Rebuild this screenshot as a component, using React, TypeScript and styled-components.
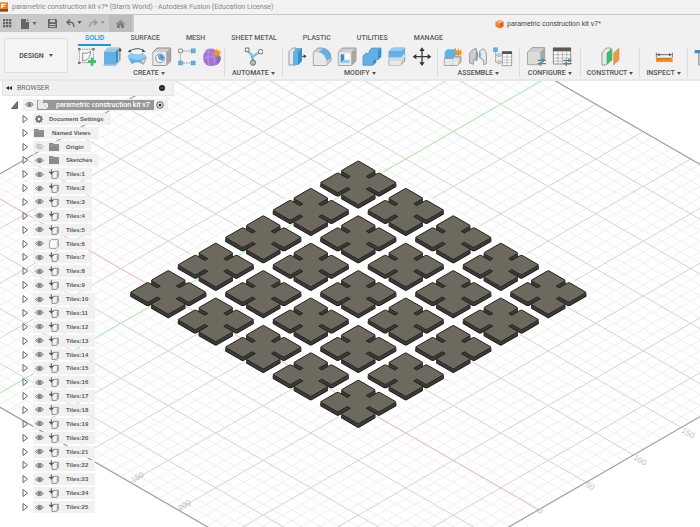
import React from "react";
import styled, { createGlobalStyle } from "styled-components";

const GlobalStyle = createGlobalStyle`
  * { box-sizing: border-box; }
  body { margin: 0; background: #fff; font-family: Roboto, "Liberation Sans", sans-serif; }
  button { font: inherit; color: inherit; border: 0; padding: 0; margin: 0; background: none; }
  ul { list-style: none; margin: 0; padding: 0; }
  svg { display: block; flex: none; }
`;

/* ---------- frame ---------- */

const Page = styled.div`
  min-height: 100vh;
  display: flex;
  flex-direction: column;
  overflow: hidden;
  color: #505050;
`;

const TitleBar = styled.header`
  display: flex;
  align-items: center;
  gap: 4px;
  height: 15px;
  padding-bottom: 1px;
  background: #f2f2f2;
  border-bottom: 1px solid #c6c6c6;
  font: 7px/12px Roboto, sans-serif;
  color: #858585;
  white-space: nowrap;
`;

const TabStrip = styled.div`
  display: flex;
  height: 17px;
  background: #f1f1f1;
`;

const QuickAccess = styled.div`
  display: flex;
  align-items: center;
  width: 134px;
  background: #c9c9c9;
  padding-right: 2px;
`;

const QuickButton = styled.button<{ $w: number; $home?: boolean }>`
  width: ${(p) => p.$w}px;
  height: 17px;
  display: flex;
  align-items: center;
  justify-content: center;
  background: ${(p) => (p.$home ? "#bcbcbc" : "transparent")};
  margin-left: ${(p) => (p.$home ? "auto" : "0")};
`;

const DocumentTab = styled.div`
  flex: 1;
  display: flex;
  align-items: center;
  justify-content: center;
  gap: 3px;
  padding-left: 262px;
  font: 7px/12px "Liberation Sans", sans-serif;
  color: #444;
  white-space: nowrap;
`;

const Toolbar = styled.div`
  display: flex;
  height: 49px;
  background: #f1f1f1;
  border-bottom: 2px solid #e8e8e8;
`;

const WorkspaceButton = styled.button`
  width: 64px;
  height: 35px;
  flex: none;
  margin: 6px 6px 0 4px;
  border: 1px solid #dedede;
  border-radius: 2px;
  background: #f4f4f4;
  font-size: 7px;
  font-weight: 600;
  display: flex;
  align-items: center;
  justify-content: center;
  gap: 5px;
`;

const Ribbon = styled.div`
  flex: 1;
  min-width: 0;
  overflow: hidden;
`;

const Tabs = styled.nav`
  display: flex;
  gap: 12px;
  height: 15px;
  padding-left: 4px;
`;

const Tab = styled.button<{ $active?: boolean }>`
  height: 14px;
  padding: 0 7px;
  font-size: 7px;
  line-height: 12px;
  font-weight: 500;
  white-space: nowrap;
  color: ${(p) => (p.$active ? "#1d8fd6" : "#5c5c5c")};
  border-bottom: 2px solid ${(p) => (p.$active ? "#2196db" : "transparent")};
`;

const Groups = styled.div`
  display: flex;
`;

const Group = styled.section<{ $pad: number }>`
  flex: none;
  display: flex;
  flex-direction: column;
  align-items: center;
  height: 30px;
  padding: 0 ${(p) => p.$pad}px;
  border-right: 1px solid #dcdcdc;
`;

const Tools = styled.div`
  display: flex;
`;

const Tool = styled.button`
  width: 25px;
  height: 20px;
  display: flex;
  justify-content: center;
`;

const GroupLabel = styled.button`
  display: flex;
  align-items: center;
  gap: 2px;
  font-size: 7px;
  font-weight: 500;
  line-height: 13px;
  white-space: nowrap;
`;

const Caret = () => (
  <svg width="4" height="3" viewBox="0 0 4 3"><path d="M0 0h4L2 3z" fill="#555" /></svg>
);

/* ---------- small glyphs ---------- */

const AppLogo = () => (
  <svg width="8" height="11" viewBox="0 0 24 33">
    <path d="M0 4h24v26H0z" fill="#f07a1c" />
    <path d="M0 24h24v8H0z" fill="#9c4611" />
    <path d="M5 22V10h12M5 16h9" fill="none" stroke="#fff" strokeWidth="4" />
  </svg>
);

const GridGlyph = () => (
  <svg width="9" height="9" viewBox="0 0 9 9" fill="#666">
    {[0, 3, 6].map((x) => [0, 3, 6].map((y) => <rect key={`${x}${y}`} x={x} y={y} width="2.300" height="2.300" />))}
  </svg>
);
const FileGlyph = () => (
  <svg width="16" height="10" viewBox="0 0 16 10" fill="#666">
    <path d="M0 0h5v3h3v7H0z" /><path d="M6 0l2 2H6zM11.500 3h4l-2 3z" />
  </svg>
);
const SaveGlyph = () => (
  <svg width="9" height="9" viewBox="0 0 9 9">
    <path d="M0 0h8l1 1v8H0z" fill="#666" /><path d="M2 .8h5v2.400H2zM1.500 5h6v1h-6zM1.500 7h6v1h-6z" fill="#c9c9c9" />
  </svg>
);
const ArrowGlyph = ({ redo }: { redo?: boolean }) => (
  <svg width="16" height="9" viewBox="0 0 16 9" fill="none" stroke={redo ? "#999" : "#666"} strokeWidth="1.400">
    {redo ? <path d="M5 .5l3 2.700-3 2.700M8 3.200H4Q1 3.400.7 8" /> : <path d="M4 .5L1 3.200l3 2.700M1 3.200h4Q7.600 3.400 8 8" />}
    <path d="M11.500 2h4l-2 3z" fill={redo ? "#999" : "#555"} stroke="none" />
  </svg>
);
const HomeGlyph = () => (
  <svg width="9" height="8" viewBox="0 0 9 8" fill="#777">
    <path d="M4.500 0L9 4l-.7.600L4.500 1.300.7 4.600 0 4z" /><path d="M4.500 2L8 5v3H5.300V5.500H3.700V8H1V5z" />
  </svg>
);
const DocCube = () => (
  <svg width="9" height="10" viewBox="0 0 18 20">
    <path d="M9 1l8 4-8 4-8-4z" fill="#ffb06a" /><path d="M1 5l8 4v10l-8-4z" fill="#f08427" /><path d="M17 5L9 9v10l8-4z" fill="#db5f12" />
  </svg>
);

/* ---------- ribbon icons, 60 unit square ---------- */

const B = "#63b0e6";
const BD = "#3a8fcb";
const BL = "#8fcdf5";
const G1 = "#e9e9e9";
const G2 = "#cfcfcf";
const G3 = "#a6a6a6";
const LN = "#8c8c8c";

const star = (x: number, y: number) => (
  <path d={`M${x} ${y - 13}l3 8 8-3-3 7 6 2-7 3 2 7-6-4-3 7-3-7-6 4 2-7-7-3 6-2-3-7 8 3z`} fill="#f0932b" />
);

const drawings: Record<string, React.ReactNode> = {
  sketch: (
    <>
      <path d="M7 7h42v40H7z" fill="#f7f7f7" stroke="#777" strokeWidth="2" strokeDasharray="5 2" />
      <path d="M17 42V18c14 2 18-1 24-6-1 17-7 28-24 30z" fill="none" stroke="#777" strokeWidth="2.500" />
      <path d="M3 3h7v7H3zM46 3h7v7h-7zM3 44h7v7H3z" fill="#777" />
      <path d="M41 32h8v8h8v8h-8v8h-8v-8h-8v-8h8z" fill="#3fbf63" />
    </>
  ),
  extrude: (
    <>
      <path d="M6 16L18 3h34L42 16z" fill={G1} stroke={LN} strokeWidth="2" />
      <path d="M6 14h34v39H6z" fill={B} /><path d="M40 14l9-9v38l-9 10z" fill={BD} />
      <path d="M6 14L15 5h34l-9 9z" fill={BL} />
      <path d="M6 50v5h36l10-11V12" fill="none" stroke="#999" strokeWidth="2" />
      <path d="M54 10v30M54 3l4 9h-8z" fill="#444" stroke="#555" strokeWidth="2" />
    </>
  ),
  revolve: (
    <>
      <path d="M8 12Q30-1 50 10" fill="none" stroke="#555" strokeWidth="3" /><path d="M2 15l8-8 2 9zM56 15l-9-8-2 8z" fill="#444" />
      <path d="M2 28L12 18q18 9 36 0l10 12-10 22q-18-12-34 0z" fill={B} />
      <path d="M2 28L12 18q18 9 36 0l10 12q-13 10-25 9-18 0-31-11z" fill={BL} />
      <path d="M42 38l16-7-8 21-8-5z" fill={G2} stroke={LN} strokeWidth="2" />
    </>
  ),
  hole: (
    <>
      <path d="M3 15L15 3h41v39L43 55H3z" fill={G2} stroke={LN} strokeWidth="3" />
      <path d="M4 15h39v39H4z" fill={G1} /><path d="M43 15L55 4v38L43 54z" fill={G3} />
      <circle cx="24" cy="34" r="13" fill="#fff" stroke={LN} strokeWidth="3" />
      <path d="M24 23a11 11 0 0 1 7 19Q17 42 18 25z" fill={B} /><path d="M24 23a11 11 0 0 1 11 14q-9-2-11-14z" fill={BD} />
    </>
  ),
  pattern: (
    <>
      <path d="M10 12h40M10 48h40M10 12v36" stroke="#777" strokeWidth="2" strokeDasharray="6 2" />
      <path d="M5 6h11v11H5z" fill="#fff" stroke="#777" strokeWidth="2.500" />
      <path d="M42 5h13v13H42zM4 42h13v12H4zM42 42h13v12H42z" fill={B} stroke={BD} />
    </>
  ),
  form: (
    <>
      <path d="M13 8q18-8 30 3l13 19q2 14-11 23-18 8-33 0Q-1 40 5 22z" fill="#a573d4" />
      <path d="M10 12q18 2 28 15l-1 25M5 33q16-5 33-4M22 6q-8 20-1 48" fill="none" stroke="#bd93e4" strokeWidth="3" />
      <path d="M43 28l13 2q1 14-11 23z" fill="#8b6bb0" />
      {star(45, 17)}
    </>
  ),
  automate: (
    <>
      <path d="M12 10l18 18 20-13M22 18q8 10 8 28" fill="none" stroke={BD} strokeWidth="6" />
      <path d="M12 10l18 18 20-13M30 28v18" fill="none" stroke={BL} strokeWidth="4" />
      <path d="M7 3h11v11H7z" fill="#eee" stroke="#777" strokeWidth="3" />
      <circle cx="53" cy="14" r="7" fill="#eee" stroke="#777" strokeWidth="3" /><circle cx="30" cy="47" r="8" fill="#bbb" stroke="#777" strokeWidth="3" />
    </>
  ),
  press: (
    <>
      <path d="M6 14L17 3h10v51H6z" fill={G1} stroke={LN} strokeWidth="2.500" />
      <path d="M18 14L29 3h16v39L33 54H18z" fill={B} /><path d="M33 14L45 3v39L33 54z" fill={BD} />
      <path d="M45 28h7" stroke="#444" strokeWidth="3" /><path d="M50 22l9 6-9 6z" fill="#444" />
    </>
  ),
  fillet: (
    <>
      <path d="M4 16L17 3h14q25 4 26 28v10L43 55H4z" fill={G2} stroke={LN} strokeWidth="2.500" />
      <path d="M5 16h13q22 5 25 28v10H5z" fill={G1} /><path d="M21 15L33 4q23 6 24 28L45 41Q39 20 21 15z" fill={B} />
    </>
  ),
  shell: (
    <>
      <path d="M4 16L16 3h41v39L43 55H4z" fill={G2} stroke={LN} strokeWidth="2.500" />
      <path d="M5 16h38v38H5z" fill={G1} /><path d="M43 16L56 4v38L43 54z" fill={G3} />
      <path d="M11 22h27v26H11z" fill="#fff" /><path d="M11 22h11v16L11 48z" fill={BD} /><path d="M11 48l11-10h16v10z" fill={BL} />
    </>
  ),
  combine: (
    <>
      <path d="M21 12L30 3h27v26l-9 9h-6v8L32 55H3V27l8-8h10z" fill={B} stroke={BD} strokeWidth="2" />
      <path d="M48 12l9-9v26l-9 9zM33 40l9-2v8L33 55z" fill={BD} />
    </>
  ),
  split: (
    <>
      <path d="M6 14L17 3h36v39L41 54H6z" fill={G2} stroke={LN} strokeWidth="2.500" />
      <path d="M6 12L15 3h39v16L42 31H6z" fill={B} /><path d="M6 12L15 3h39L42 12z" fill={BL} />
      <path d="M3 36h39L57 22" fill="none" stroke="#f1f1f1" strokeWidth="6" />
      <path d="M3 36h39L57 22" fill="none" stroke={BL} strokeWidth="3" />
      <path d="M7 41h34v13H7z" fill={G1} />
    </>
  ),
  move: (
    <>
      <path d="M30 8v42M9 29h42" stroke="#3c3c3c" strokeWidth="4" />
      <path d="M30 1l8 11H22zM30 57l8-11H22zM2 29l11-8v16zM58 29l-11-8v16z" fill="#333" />
    </>
  ),
  newComponent: (
    <>
      <path d="M4 34h26V12L39 4M4 34v21h39l11-10V29H30" fill={G2} stroke={LN} strokeWidth="2.500" />
      <path d="M5 15L13 7h26v17l-9 10H5z" fill={B} /><path d="M31 35h14v19H31z" fill={G1} /><path d="M5 36h23v18H5z" fill={G1} />
      {star(46, 16)}
    </>
  ),
  joint: (
    <>
      <path d="M5 48V20Q11 5 25 5l2 18v18L16 37v15z" fill={G2} stroke={LN} strokeWidth="2.500" />
      <path d="M35 12q5-5 12-7 8 6 8 18v27l-8 3V39l-11-6z" fill={G1} stroke={LN} strokeWidth="2.500" />
      <path d="M25 8l6 12-4 20-5-6z" fill="#999" /><path d="M34 12l5 10-3 12-4-3z" fill={B} />
    </>
  ),
  table: (
    <>
      <path d="M8 12v34h18M8 24h18" fill="none" stroke="#888" strokeWidth="2" />
      <path d="M1 2h13v12H1z" fill={B} stroke={BD} /><path d="M14 20h10v9H14zM14 41h10v9H14z" fill={G2} stroke={LN} />
      <path d="M28 14h28v42H28z" fill="#fff" stroke={LN} strokeWidth="2.500" /><path d="M27 13h30v8H27z" fill="#555" />
      <path d="M28 30h28M28 39h28M28 47h28M42 21v34" stroke={G3} strokeWidth="2" />
    </>
  ),
  configure: (
    <>
      <path d="M2 15L15 2h38v38L41 53H2z" fill={G2} stroke={LN} strokeWidth="2.500" />
      <path d="M3 15h37v37H3z" fill="#dcdcdc" /><path d="M40 15L52 3v37L40 52z" fill={G3} />
      <path d="M32 40h25M32 50h25" stroke="#666" strokeWidth="3" /><path d="M46 35h5v10h-5zM38 45h5v11h-5z" fill={BD} />
    </>
  ),
  configTable: (
    <>
      <path d="M4 3h52v48H4z" fill="#fff" stroke={LN} strokeWidth="3" /><path d="M3 2h54v11H3z" fill="#5b5b50" />
      <path d="M4 23h52M4 33h52M4 42h52M18 13v38M31 13v38M44 13v38" stroke={G3} strokeWidth="2.500" />
      <path d="M34 40h25M34 50h25" stroke="#666" strokeWidth="3" /><path d="M48 35h5v10h-5zM40 45h5v11h-5z" fill={BD} />
    </>
  ),
  construct: (
    <>
      <path d="M6 17L19 3h13v37L17 54H6z" fill={G1} stroke={LN} strokeWidth="2.500" />
      <path d="M20 17L37 4v35L20 54z" fill="#44b96b" /><path d="M41 17L57 4v35L41 54z" fill="#ec9a46" />
      <path d="M41 17L57 4v35L41 54z" fill="none" stroke="#d5802c" strokeWidth="2" strokeDasharray="4 2" />
    </>
  ),
  inspect: (
    <>
      <path d="M7 17v14M55 17v14M10 23h42" stroke="#555" strokeWidth="2.500" /><path d="M9 23l8-4v8zM53 23l-8-4v8z" fill="#444" />
      <path d="M6 32h50v13H6z" fill="#f0932b" /><path d="M12 33v5M19 33v5M26 33v5M33 33v5M40 33v5M47 33v5" stroke="#8b5313" strokeWidth="2" />
    </>
  ),
  insert: (
    <>
      <path d="M14 18L25 7h31v36L44 54H14z" fill={G2} stroke={LN} strokeWidth="2.500" />
      <path d="M2 9h16V3l14 11-14 11v-6H2z" fill={BD} />
    </>
  ),
};

const RibbonIcon = ({ name }: { name: string }) => (
  <svg width="20" height="20" viewBox="0 0 60 60">{drawings[name]}</svg>
);

const groups: { label: string; pad: number; tools: string[] }[] = [
  { label: "CREATE", pad: 0, tools: ["sketch", "extrude", "revolve", "hole", "pattern", "form"] },
  { label: "AUTOMATE", pad: 7, tools: ["automate"] },
  { label: "MODIFY", pad: 2, tools: ["press", "fillet", "shell", "combine", "split", "move"] },
  { label: "ASSEMBLE", pad: 3, tools: ["newComponent", "joint", "table"] },
  { label: "CONFIGURE", pad: 5, tools: ["configure", "configTable"] },
  { label: "CONSTRUCT", pad: 6, tools: ["construct"] },
  { label: "INSPECT", pad: 6, tools: ["inspect"] },
  { label: "", pad: 4, tools: ["insert"] },
];

/* ---------- model view ---------- */

const Viewport = styled.main`
  position: relative;
  flex: 1;
  overflow: hidden;
`;

const Scene = styled.svg`
  position: absolute;
  inset: 0;
  width: 100%;
  height: 100%;
`;

const ORIGIN = { x: 168.2, y: 296 };
const STEP = { x: 47.5, y: 27.4 };
const A_RANGE = [-4, 7.8];
const B_RANGE = [-3.8, 8];

const project = (a: number, b: number) => [ORIGIN.x + STEP.x * (a + b), ORIGIN.y + STEP.y * (a - b)];
const line = (a1: number, b1: number, a2: number, b2: number) =>
  `M${project(a1, b1).map((n) => n.toFixed(2)).join(" ")}L${project(a2, b2).map((n) => n.toFixed(2)).join(" ")}`;

const gridPath = (major: boolean) => {
  let d = "";
  for (let i = -20; i <= 40; i++) {
    if ((i % 5 === 0) !== major) continue;
    const t = i / 5;
    if (t >= A_RANGE[0] && t <= A_RANGE[1]) d += line(t, B_RANGE[0], t, B_RANGE[1]);
    if (t >= B_RANGE[0] && t <= B_RANGE[1]) d += line(A_RANGE[0], t, A_RANGE[1], t);
  }
  return d;
};

const tileQuarter = [
  [-0.39, 0.4], [-0.05, 0.4], [-0.032, 0.38], [-0.032, 0.2], [0.032, 0.2], [0.032, 0.38], [0.05, 0.4], [0.39, 0.4], [0.4, 0.39],
];
const tileOutline: number[][] = [];
for (let q = 0; q < 4; q++) {
  tileQuarter.forEach(([a, b]) => {
    let p = [a, b];
    for (let k = 0; k < q; k++) p = [p[1], -p[0]];
    tileOutline.push([STEP.x * (p[0] + p[1]), STEP.y * (p[0] - p[1])]);
  });
}
const tilePath = (dy: number) => `M${tileOutline.map(([x, y]) => `${x.toFixed(2)} ${(y + dy).toFixed(2)}`).join("L")}Z`;

const TileShape = () => (
  <g strokeLinejoin="round">
    <path d={tilePath(3.5)} fill="#302f2c" stroke="#1d1c1a" strokeWidth="1.200" />
    {[2.5, 1.5].map((dy) => <path key={dy} d={tilePath(dy)} fill="#45433e" stroke="#3b3935" strokeWidth="1.200" />)}
    <path d={tilePath(0)} fill="#6d695f" stroke="#24231f" strokeWidth="1" />
  </g>
);

const tiles = Array.from({ length: 25 }, (_, n) => ({ i: n % 5, j: Math.floor(n / 5) })).sort((p, q) => p.i + p.j - q.i - q.j);

const ScaleText = styled.text`
  font: 8px "Liberation Sans", sans-serif;
  fill: #bdbdbd;
`;

const Model = () => (
  <Scene viewBox="0 81 700 446" preserveAspectRatio="xMidYMin slice" role="img" aria-label="Isometric view of 25 tiles">
    <path d={gridPath(false)} stroke="#efefef" strokeWidth="1" />
    <path d={gridPath(true)} stroke="#d3d3d3" strokeWidth="1" />
    <path d="M358 156L592 292 358 428 126 292z" fill="#fff" />
    <path d={line(A_RANGE[0], 0, A_RANGE[1], 0)} stroke="#ffb9b3" strokeWidth="1" />
    <path d={line(0, B_RANGE[0], 0, B_RANGE[1])} stroke="#a6f5a6" strokeWidth="1" />
    <path
      d={line(-4, -3.8, -4, 8) + line(-4, 8, 7.8, 8) + line(7.8, 8, 7.8, -3.8) + line(7.8, -3.8, -4, -3.8)}
      stroke="#9f9f9f" strokeWidth="1.200"
    />
    <ScaleText transform="translate(133 483) rotate(-30)">150</ScaleText>
    <ScaleText transform="translate(180 511) rotate(-30)">200</ScaleText>
    <ScaleText transform="translate(537 512) rotate(30)">0</ScaleText>
    <ScaleText transform="translate(585 486) rotate(30)">50</ScaleText>
    <ScaleText transform="translate(633 459) rotate(30)">100</ScaleText>
    <ScaleText transform="translate(681 432) rotate(30)">150</ScaleText>
    {tiles.map(({ i, j }) => (
      <g key={`${i}-${j}`} transform={`translate(${358.3 + STEP.x * (i - j)} ${182.8 + STEP.y * (i + j)})`}>
        <TileShape />
      </g>
    ))}
  </Scene>
);

/* ---------- browser tree ---------- */

const Browser = styled.aside`
  position: relative;
  width: 174px;
  font: 6px/10px "Liberation Sans", sans-serif;
`;

const BrowserHeader = styled.div`
  display: flex;
  align-items: center;
  gap: 5px;
  height: 15px;
  margin-left: 2px;
  padding: 0 6px 0 3px;
  background: #f0f0f0;
  border: 1px solid #e6e6e6;
  border-top: 0;
  font: 7px/12px Roboto, sans-serif;
  color: #666;
`;

const Spacer = styled.span`
  flex: 1;
`;

const Tree = styled.ul`
  display: grid;
  grid-auto-rows: 1fr;
  row-gap: 2px;
  height: 417px;
  padding-top: 3px;
`;

const Row = styled.li<{ $root?: boolean }>`
  display: flex;
  align-items: center;
  gap: ${(p) => (p.$root ? 5 : 4)}px;
  padding-left: ${(p) => (p.$root ? 11 : 22)}px;
  min-height: 0;
`;

const Expander = styled.button`
  width: 7px;
  height: 10px;
`;

const RowBody = styled.div<{ $root?: boolean }>`
  display: flex;
  align-items: center;
  align-self: stretch;
  padding: 0 ${(p) => (p.$root ? 3 : 7)}px 0 1px;
  background: rgba(240, 240, 240, 0.93);
`;

const IconButton = styled.button`
  width: 10px;
  height: 10px;
  display: flex;
  align-items: center;
  justify-content: center;
`;

const KindIcon = styled.span`
  display: flex;
  justify-content: center;
  width: 12px;
  margin-left: 4px;
`;

const RowLabel = styled.span<{ $gap: number }>`
  margin-left: ${(p) => p.$gap}px;
  font-weight: 700;
  white-space: nowrap;
  color: #5a5a5a;
`;

const RootChip = styled.span`
  display: flex;
  align-items: center;
  align-self: stretch;
  gap: 8px;
  margin: 1px 1px 1px 3px;
  padding: 0 4px 0 1px;
  background: #989898;
  color: #fff;
  font: 500 7px/10px Roboto, sans-serif;
  white-space: nowrap;
`;

const Eye = ({ off }: { off?: boolean }) => (
  <svg width="9" height="7" viewBox="0 0 18 14" fill="none" stroke={off ? "#bbb" : "#858585"} strokeWidth="2">
    <path d="M1 7Q9-2 17 7 9 16 1 7z" fill={off ? "none" : "#d5d5d5"} /><circle cx="9" cy="7" r="3" fill={off ? "none" : "#777"} />
    {off && <path d="M3 1l12 12" />}
  </svg>
);
const Folder = () => (
  <svg width="10" height="8" viewBox="0 0 10 8"><path d="M0 0h4l1 1h5v7H0z" fill="#8b8b8b" /><path d="M0 2.200h10" stroke="#a9a9a9" strokeWidth=".6" /></svg>
);
const Gear = () => (
  <svg width="8" height="8" viewBox="0 0 16 16">
    <circle cx="8" cy="8" r="4.500" fill="none" stroke="#777" strokeWidth="3.500" />
    <path d="M8 0v3M8 13v3M0 8h3M13 8h3M2.300 2.300l2 2M11.700 11.700l2 2M2.300 13.700l2-2M11.700 4.300l2-2" stroke="#777" strokeWidth="3" />
  </svg>
);
const LinkedPart = () => (
  <svg width="10" height="10" viewBox="0 0 30 30">
    <path d="M9 11l4-4h15v16l-5 5H9z" fill="#f5f5f5" stroke="#777" strokeWidth="2.500" /><path d="M23 12l5-5v16l-5 5z" fill="#aaa" />
    <path d="M7 1v14M0 10h14" stroke="#555" strokeWidth="3" /><path d="M2 10h10l-5 8z" fill="#555" />
  </svg>
);
const PlainPart = () => (
  <svg width="10" height="10" viewBox="0 0 30 30">
    <path d="M2 8q0-2 6-6h18q2 0 2 2v18l-6 6H4q-2 0-2-2z" fill="#fff" stroke="#888" strokeWidth="2.500" /><path d="M23 8l4-4v17l-4 5z" fill="#ccc" />
  </svg>
);
const Assembly = () => (
  <svg width="10" height="9" viewBox="0 0 30 27">
    <path d="M2 3l3-2h8v10h-3v14H2z" fill="#ddd" stroke="#fff" strokeWidth="3" /><path d="M14 14l3-3h11v11l-3 3H14z" fill="#ddd" stroke="#fff" strokeWidth="3" />
  </svg>
);
const Closed = () => (
  <svg width="7" height="10" viewBox="0 0 14 20"><path d="M2 3v14l9-7z" fill="#fff" stroke="#666" strokeWidth="2" strokeLinejoin="round" /></svg>
);

const KINDS = { folder: Folder, linked: LinkedPart, part: PlainPart };
type Node = { name: string; kind: keyof typeof KINDS; hidden?: boolean };

const nodes: Node[] = [
  { name: "Origin", kind: "folder", hidden: true },
  { name: "Sketches", kind: "folder" },
  ...Array.from({ length: 25 }, (_, n): Node => ({ name: `Tiles:${n + 1}`, kind: n === 5 ? "part" : "linked" })),
];

const TreeRow = ({ node }: { node: Node }) => {
  const Kind = KINDS[node.kind];
  return (
    <Row>
      <Expander aria-label={`Expand ${node.name}`}><Closed /></Expander>
      <RowBody>
        <IconButton aria-label={`Toggle ${node.name}`}><Eye off={node.hidden} /></IconButton>
        <KindIcon><Kind /></KindIcon>
        <RowLabel $gap={6}>{node.name}</RowLabel>
      </RowBody>
    </Row>
  );
};

const BrowserPanel = () => (
  <Browser>
    <BrowserHeader>
      <svg width="6" height="4" viewBox="0 0 6 4"><path d="M3 0v4L0 2zM6 0v4L3 2z" fill="#222" /></svg>
      BROWSER
      <Spacer />
      <IconButton aria-label="Browser options">
        <svg width="6" height="6" viewBox="0 0 6 6"><circle cx="3" cy="3" r="3" fill="#222" /><path d="M1.500 3h3" stroke="#999" strokeWidth=".7" /></svg>
      </IconButton>
    </BrowserHeader>
    <Tree>
      <Row $root>
        <Expander aria-label="Collapse root">
          <svg width="7" height="10" viewBox="0 0 14 20"><path d="M13 3v14H1z" fill="#777" stroke="#444" strokeWidth="1.500" /></svg>
        </Expander>
        <RowBody $root>
          <IconButton aria-label="Toggle root"><Eye /></IconButton>
          <RootChip><Assembly />parametric construction kit v7</RootChip>
          <IconButton aria-label="Activate root">
            <svg width="8" height="8" viewBox="0 0 16 16"><circle cx="8" cy="8" r="6.500" fill="#fff" stroke="#444" strokeWidth="1.800" /><circle cx="8" cy="8" r="3" fill="#333" /></svg>
          </IconButton>
        </RowBody>
      </Row>
      <Row>
        <Expander aria-label="Expand Document Settings"><Closed /></Expander>
        <RowBody><IconButton as="span"><Gear /></IconButton><RowLabel $gap={5}>Document Settings</RowLabel></RowBody>
      </Row>
      <Row>
        <Expander aria-label="Expand Named Views"><Closed /></Expander>
        <RowBody><IconButton as="span"><Folder /></IconButton><RowLabel $gap={8}>Named Views</RowLabel></RowBody>
      </Row>
      {nodes.map((node) => <TreeRow key={node.name} node={node} />)}
    </Tree>
  </Browser>
);

const tabNames = ["SOLID", "SURFACE", "MESH", "SHEET METAL", "PLASTIC", "UTILITIES", "MANAGE"];

export default function App() {
  return (
    <Page>
      <GlobalStyle />
      <TitleBar><AppLogo />parametric construction kit v7* (Stan's World) - Autodesk Fusion (Education License)</TitleBar>
      <TabStrip>
        <QuickAccess>
          <QuickButton $w={15} aria-label="Apps"><GridGlyph /></QuickButton>
          <QuickButton $w={28} aria-label="File"><FileGlyph /></QuickButton>
          <QuickButton $w={19} aria-label="Save"><SaveGlyph /></QuickButton>
          <QuickButton $w={24} aria-label="Undo"><ArrowGlyph /></QuickButton>
          <QuickButton $w={22} aria-label="Redo"><ArrowGlyph redo /></QuickButton>
          <QuickButton $w={23} $home aria-label="Home"><HomeGlyph /></QuickButton>
        </QuickAccess>
        <DocumentTab><DocCube />parametric construction kit v7*</DocumentTab>
      </TabStrip>
      <Toolbar>
        <WorkspaceButton>DESIGN <Caret /></WorkspaceButton>
        <Ribbon>
          <Tabs>{tabNames.map((name, n) => <Tab key={name} $active={n === 0}>{name}</Tab>)}</Tabs>
          <Groups>
            {groups.map((g) => (
              <Group key={g.tools[0]} $pad={g.pad}>
                <Tools>{g.tools.map((t) => <Tool key={t} aria-label={t}><RibbonIcon name={t} /></Tool>)}</Tools>
                {g.label && <GroupLabel>{g.label}<Caret /></GroupLabel>}
              </Group>
            ))}
          </Groups>
        </Ribbon>
      </Toolbar>
      <Viewport>
        <Model />
        <BrowserPanel />
      </Viewport>
    </Page>
  );
}
